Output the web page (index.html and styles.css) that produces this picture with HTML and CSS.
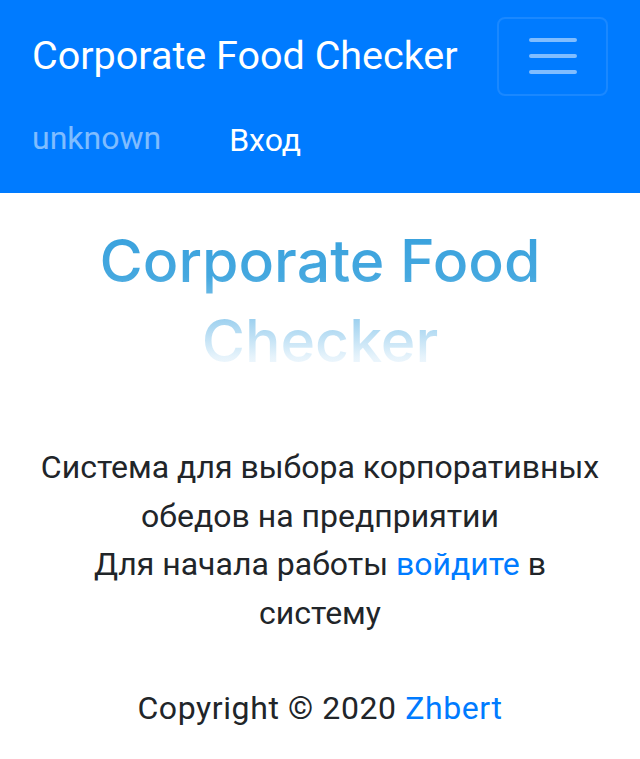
FILE: index.html
```html
<!DOCTYPE html>
<html lang="ru">
<head>
<meta charset="utf-8">
<title>Corporate Food Checker</title>
<link rel="stylesheet" href="styles.css">
</head>
<body>
<nav class="navbar">
  <div class="navbar-top">
    <a class="brand" href="#">Corporate Food Checker</a>
    <button class="toggler" type="button" aria-label="Toggle navigation">
      <svg width="60" height="60" viewBox="0 0 30 30" aria-hidden="true">
        <path d="M4 7h22M4 15h22M4 23h22" stroke="rgba(255,255,255,0.5)" stroke-width="2" stroke-linecap="round" fill="none"/>
      </svg>
    </button>
  </div>
  <div class="navbar-nav">
    <span class="nav-text">unknown</span>
    <a class="nav-link" href="#">Вход</a>
  </div>
</nav>
<main class="content">
  <h1 class="title">Corporate Food Checker</h1>
  <p class="lead">Система для выбора корпоративных обедов на предприятии<br>Для начала работы <a href="#" class="link">войдите</a> в систему</p>
  <footer class="footer">Copyright © 2020 <a href="#" class="link">Zhbert</a></footer>
</main>
</body>
</html>
```
FILE: styles.css
```css
html, body {
  margin: 0;
  padding: 0;
}
body {
  font-family: Roboto, "Noto Sans", sans-serif;
  color: #212529;
  background: #fff;
}
.navbar {
  background: #007bff;
  padding: 16px 32px;
  height: 193px;
  box-sizing: border-box;
}
.navbar-top {
  display: flex;
  justify-content: space-between;
  align-items: center;
}
.brand {
  font-size: 39.5px;
  line-height: 80px;
  color: #fff;
  text-decoration: none;
}
.toggler {
  width: 111px;
  height: 79px;
  background: transparent;
  border: 2px solid rgba(255, 255, 255, 0.1);
  border-radius: 8px;
  display: flex;
  align-items: center;
  justify-content: center;
  padding: 0;
}
.navbar-nav {
  display: flex;
  align-items: center;
  gap: 68px;
  height: 80px;
  padding-top: 8px;
  box-sizing: border-box;
}
.nav-text {
  color: rgba(255, 255, 255, 0.5);
  font-size: 32px;
  margin-top: -5px;
}
.nav-link {
  color: #fff;
  font-size: 32px;
  text-decoration: none;
}
.content {
  text-align: center;
  padding: 0 32px;
}
.title {
  font-family: Inter, "Liberation Sans", sans-serif;
  font-weight: 500;
  font-size: 59px;
  line-height: 80px;
  margin: 28px auto 0;
  width: 480px;
  background: linear-gradient(to bottom, #36a0dd 0%, #45a8df 35%, #a9d6f1 65%, #e6f3fb 85%, #ffffff 100%);
  -webkit-background-clip: text;
  background-clip: text;
  color: transparent;
}
.lead {
  font-size: 32px;
  line-height: 48.5px;
  margin: 62px 0 0;
}
.link {
  color: #007bff;
  text-decoration: none;
}
.footer {
  font-size: 32px;
  line-height: 48px;
  margin-top: 47px;
  letter-spacing: 0.6px;
}
```
